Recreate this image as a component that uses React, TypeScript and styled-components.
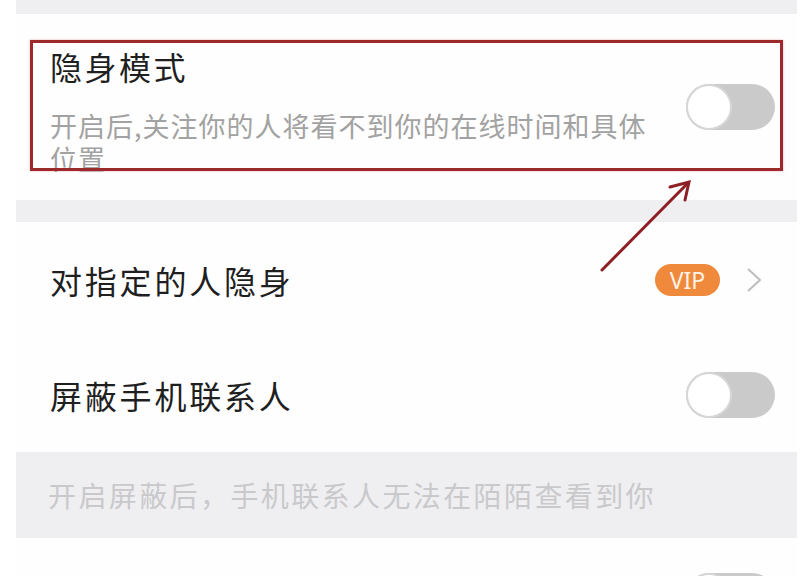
import React from "react";
import styled, { createGlobalStyle } from "styled-components";

const Global = createGlobalStyle`
  html, body { margin: 0; padding: 0; background: #ffffff; }
  body { width: 808px; height: 576px; overflow: hidden; font-family: "Noto Sans CJK SC", "Noto Sans", sans-serif; }
`;

const Page = styled.div`
  position: relative;
  width: 808px;
  height: 576px;
  overflow: hidden;
  background: #ffffff;
  padding: 0 11px 0 16px;
  box-sizing: border-box;
`;

const Screen = styled.div`
  display: flex;
  flex-direction: column;
  background: #fefefe;
`;

const Band = styled.div<{ $h: number }>`
  height: ${(p) => p.$h}px;
  background: #efeff1;
  flex: none;
`;

const HintBand = styled.div`
  height: 86px;
  background: #efeff1;
  display: flex;
  align-items: center;
  padding-left: 32px;
  font-size: 28px;
  letter-spacing: 2.4px;
  color: #c9c9cc;
`;

const Row = styled.div<{ $h: number }>`
  position: relative;
  height: ${(p) => p.$h}px;
  display: flex;
  align-items: center;
  padding: 0 22px 0 34px;
  flex: none;
`;

const TextBlock = styled.div`
  width: 612px;
  margin-top: 8px;
  margin-right: auto;
`;

const Title = styled.div`
  font-size: 32px;
  line-height: 38px;
  letter-spacing: 2.5px;
  color: #1f1f1f;
`;

const Label = styled.div`
  font-size: 32px;
  letter-spacing: 2.8px;
  color: #1f1f1f;
  margin-right: auto;
`;

const Sub = styled.div`
  margin-top: 24px;
  font-size: 27px;
  line-height: 33px;
  letter-spacing: 1px;
  color: #a2a2a2;
`;

const Track = styled.div`
  width: 89px;
  height: 46px;
  border-radius: 23px;
  background: #cacaca;
  flex: none;
  display: flex;
  align-items: center;
`;

const Knob = styled.div`
  width: 46px;
  height: 46px;
  border-radius: 50%;
  background: #ffffff;
  box-sizing: border-box;
  border: 2px solid #d6d6d6;
`;

const VipPill = styled.div`
  width: 65px;
  height: 32px;
  border-radius: 16px;
  background: #ef8a3c;
  color: #fff3e6;
  font-family: "Noto Sans", sans-serif;
  font-size: 23px;
  line-height: 32px;
  text-align: center;
`;

const Chevron = styled.svg`
  margin-left: 26px;
  margin-right: 13px;
  flex: none;
`;

const Highlight = styled.div`
  position: absolute;
  left: 14px;
  right: 14px;
  top: 26px;
  bottom: 29px;
  border: 3px solid #9c2a2c;
  box-shadow: 0 0 2px rgba(200, 70, 70, 0.45);
  pointer-events: none;
`;

const ArrowSvg = styled.svg`
  position: absolute;
  left: 0;
  top: 0;
  pointer-events: none;
`;

const Toggle = () => (
  <Track>
    <Knob />
  </Track>
);

export default function App() {
  return (
    <>
      <Global />
      <Page>
        <Screen>
          <Band $h={14} />
          <Row $h={186}>
            <TextBlock>
              <Title>隐身模式</Title>
              <Sub>开启后,关注你的人将看不到你的在线时间和具体位置</Sub>
            </TextBlock>
            <Toggle />
            <Highlight />
          </Row>
          <Band $h={22} />
          <Row $h={115}>
            <Label>对指定的人隐身</Label>
            <VipPill>VIP</VipPill>
            <Chevron width="16" height="26" viewBox="0 0 16 26">
              <polyline points="2,2 14,13 2,24" fill="none" stroke="#bdbdbd" strokeWidth="2" />
            </Chevron>
          </Row>
          <Row $h={115}>
            <Label>屏蔽手机联系人</Label>
            <Toggle />
          </Row>
          <HintBand>开启屏蔽后，手机联系人无法在陌陌查看到你</HintBand>
          <Row $h={115}>
            <Label>隐藏地理位置</Label>
            <Toggle />
          </Row>
        </Screen>
        <ArrowSvg width="808" height="576" viewBox="0 0 808 576">
          <g stroke="#8e1f25" strokeWidth="3" strokeLinecap="round" fill="none">
            <line x1="602" y1="270" x2="688" y2="183" />
            <polyline points="670,187 689,182 685,200" />
          </g>
        </ArrowSvg>
      </Page>
    </>
  );
}
